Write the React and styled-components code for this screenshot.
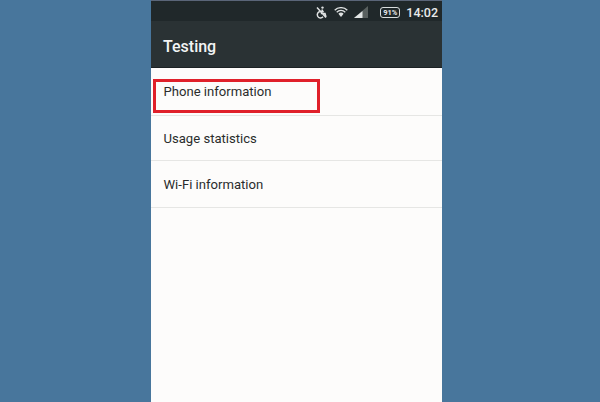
import React from "react"
import styled, { createGlobalStyle } from "styled-components"

const Global = createGlobalStyle`
  html, body { margin: 0; padding: 0; height: 100%; }
  body { background: #48769c; font-family: Roboto, "Liberation Sans", sans-serif; overflow: hidden; }
`

const Page = styled.div`
  width: 600px;
  height: 402px;
  display: flex;
  justify-content: flex-start;
  padding-left: 151px;
  box-sizing: border-box;
  background: #48769c;
`

const Phone = styled.div`
  width: 291px;
  height: 402px;
  background: #fdfcfb;
  display: flex;
  flex-direction: column;
`

const StatusBar = styled.div`
  height: 21px;
  background: #20282a;
  border-top: 1px solid #5a6578;
  box-sizing: border-box;
  display: flex;
  align-items: center;
  justify-content: flex-end;
  padding: 2px 4px 0 0;
  color: #e8eaea;
`

const StatusIcon = styled.svg`
  display: block;
  margin-right: ${p => p.$gap}px;
`

const Battery = styled.span`
  width: 20px;
  height: 11px;
  border: 1px solid #d8dcdc;
  border-radius: 3px;
  box-sizing: border-box;
  display: flex;
  align-items: center;
  justify-content: center;
  font-size: 7.5px;
  font-weight: 700;
  margin-right: 6px;
`

const Clock = styled.span`
  font-size: 12.5px;
  font-weight: 500;
`

const AppBar = styled.div`
  height: 47px;
  background: #2a3234;
  border-bottom: 1px solid #1c2224;
  box-sizing: border-box;
  display: flex;
  align-items: center;
  padding: 4px 0 0 12px;
  color: #f2f4f4;
  font-size: 16px;
  font-weight: 500;
`

const List = styled.div`
  display: flex;
  flex-direction: column;
  padding-top: 2px;
`

const Row = styled.div`
  height: ${p => p.$height}px;
  box-sizing: border-box;
  border-bottom: 1px solid #e6e6e4;
  display: flex;
  align-items: center;
  padding: 0 0 ${p => p.$lift}px 12.5px;
  color: #2a2c2c;
  font-size: 13.1px;
  position: relative;
`

const Highlight = styled.div`
  position: absolute;
  left: 2px;
  top: 9px;
  width: 167px;
  height: 34px;
  box-sizing: border-box;
  border: 3px solid #e0202a;
`

const rows = [
  { label: "Phone information", height: 46, lift: 2, marked: true },
  { label: "Usage statistics", height: 45, lift: 0 },
  { label: "Wi-Fi information", height: 47, lift: 0 },
]

export default function App() {
  return (
    <Page>
      <Global />
      <Phone>
        <StatusBar>
          <StatusIcon $gap={6} width="13" height="13" viewBox="0 0 13 13" fill="none" stroke="#dfe2e2" strokeWidth="1.5">
            <circle cx="7.5" cy="1.6" r="1.2" fill="#dfe2e2" stroke="none" />
            <path d="M7.4 3.5 6.6 7.5H10L11 11M6 5.5 8.8 5.5M5.3 5.6A3.2 3.2 0 1 0 8 10.8M2 1.5l9 10" />
          </StatusIcon>
          <StatusIcon $gap={6} width="14" height="11" viewBox="0 0 14 11" fill="none" stroke="#dfe2e2" strokeWidth="1.3">
            <path d="M.7 3.2a9 9 0 0 1 12.6 0M2.7 5.2a6.2 6.2 0 0 1 8.6 0" />
            <path d="M4.4 6.8a3.6 3.6 0 0 1 5.2 0L7 10z" fill="#dfe2e2" stroke="none" />
          </StatusIcon>
          <StatusIcon $gap={12} width="14" height="12" viewBox="0 0 14 12">
            <path d="M14 0v12H0z" fill="#59605f" />
            <path d="M8.5 5v7H0z" fill="#e2e5e5" />
          </StatusIcon>
          <Battery>91%</Battery>
          <Clock>14:02</Clock>
        </StatusBar>
        <AppBar>Testing</AppBar>
        <List>
          {rows.map(r => (
            <Row key={r.label} $height={r.height} $lift={r.lift}>
              {r.label}
              {r.marked && <Highlight />}
            </Row>
          ))}
        </List>
      </Phone>
    </Page>
  )
}
